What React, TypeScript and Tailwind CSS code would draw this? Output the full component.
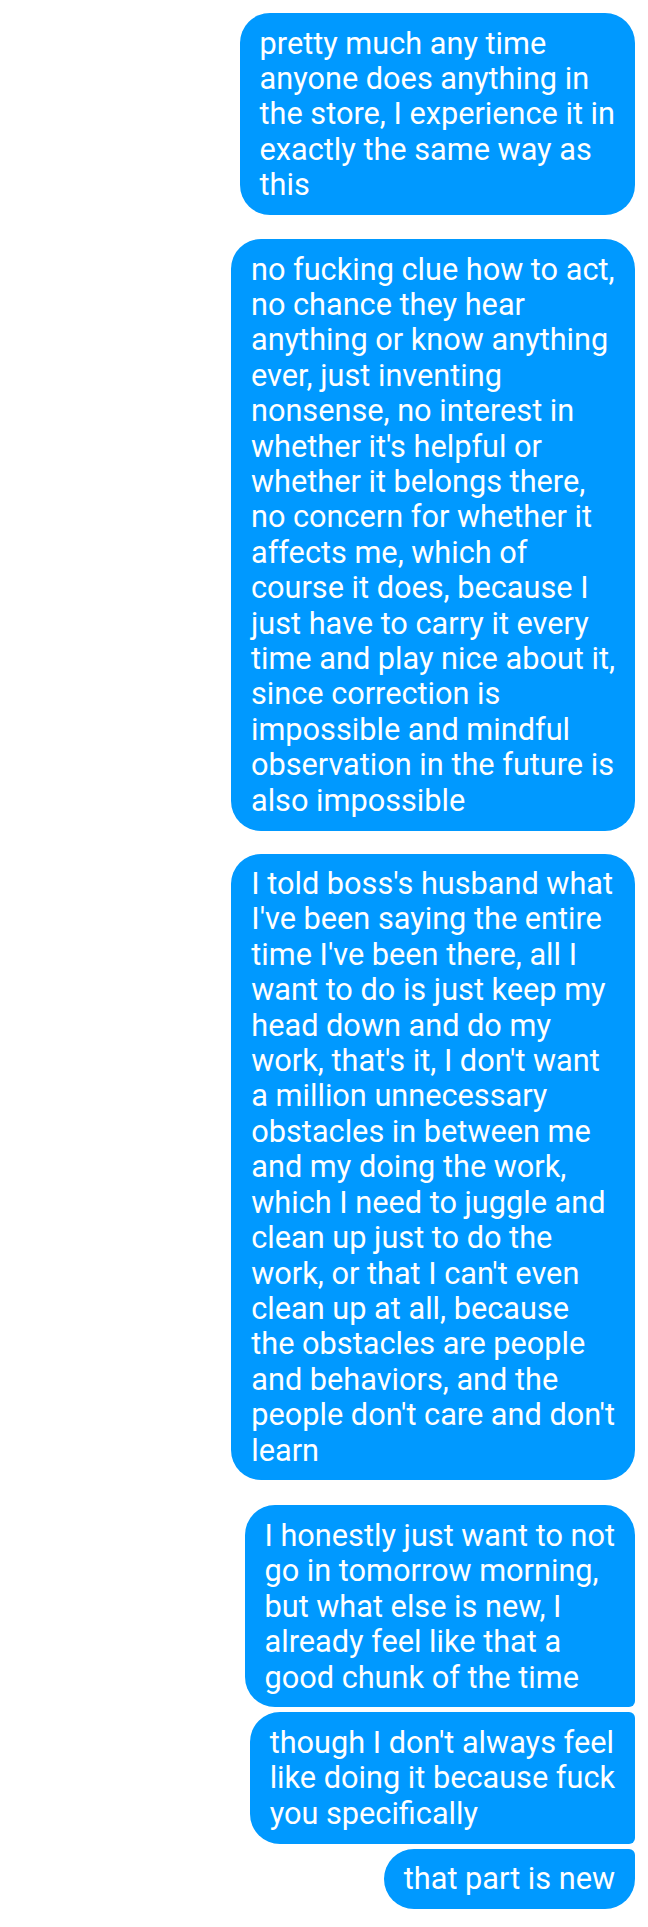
import React from "react";

type Corners = "all" | "first" | "middle" | "last";

interface Message {
  lines: string[];
  corners: Corners;
  gap: string;
}

const messages: Message[] = [
  {
    lines: [
      "pretty much any time",
      "anyone does anything in",
      "the store, I experience it in",
      "exactly the same way as",
      "this",
    ],
    corners: "all",
    gap: "mt-[13px]",
  },
  {
    lines: [
      "no fucking clue how to act,",
      "no chance they hear",
      "anything or know anything",
      "ever, just inventing",
      "nonsense, no interest in",
      "whether it's helpful or",
      "whether it belongs there,",
      "no concern for whether it",
      "affects me, which of",
      "course it does, because I",
      "just have to carry it every",
      "time and play nice about it,",
      "since correction is",
      "impossible and mindful",
      "observation in the future is",
      "also impossible",
    ],
    corners: "all",
    gap: "mt-[24px]",
  },
  {
    lines: [
      "I told boss's husband what",
      "I've been saying the entire",
      "time I've been there, all I",
      "want to do is just keep my",
      "head down and do my",
      "work, that's it, I don't want",
      "a million unnecessary",
      "obstacles in between me",
      "and my doing the work,",
      "which I need to juggle and",
      "clean up just to do the",
      "work, or that I can't even",
      "clean up at all, because",
      "the obstacles are people",
      "and behaviors, and the",
      "people don't care and don't",
      "learn",
    ],
    corners: "all",
    gap: "mt-[23px]",
  },
  {
    lines: [
      "I honestly just want to not",
      "go in tomorrow morning,",
      "but what else is new, I",
      "already feel like that a",
      "good chunk of the time",
    ],
    corners: "first",
    gap: "mt-[25px]",
  },
  {
    lines: [
      "though I don't always feel",
      "like doing it because fuck",
      "you specifically",
    ],
    corners: "middle",
    gap: "mt-[5px]",
  },
  {
    lines: ["that part is new"],
    corners: "last",
    gap: "mt-[5px]",
  },
];

const cornerClass: Record<Corners, string> = {
  all: "rounded-[30px]",
  first: "rounded-[30px] rounded-br-[6px]",
  middle: "rounded-l-[30px] rounded-r-[6px]",
  last: "rounded-[30px] rounded-tr-[6px]",
};

const Bubble = ({ lines, corners, gap }: Message) => {
  return (
    <div
      className={`${gap} ${cornerClass[corners]} bg-[#0099ff] px-[20px] py-[12.5px] text-white`}
    >
      {lines.map((line, i) => (
        <div key={i} className="whitespace-nowrap">
          {line}
        </div>
      ))}
    </div>
  );
};

export default function App() {
  return (
    <div
      className="flex min-h-[1927px] w-full flex-col items-end bg-white pr-[13px] text-[30.7px] leading-[35.4px]"
      style={{ fontFamily: "Roboto, 'Noto Sans', sans-serif" }}
    >
      {messages.map((m, i) => (
        <Bubble key={i} {...m} />
      ))}
    </div>
  );
}
